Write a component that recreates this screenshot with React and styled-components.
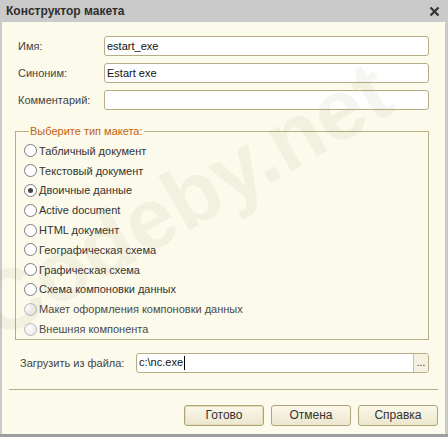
import React from "react";
import styled, { createGlobalStyle } from "styled-components";

const Global = createGlobalStyle`
  html, body { margin: 0; padding: 0; background: #c9c9c9; }
  * { box-sizing: border-box; }
`;

const Window = styled.div`
  width: 448px;
  height: 437px;
  background: #cacaca;
  border-bottom: 3px solid #9e9e9e;
  display: flex;
  flex-direction: column;
  font-family: "Liberation Sans", Arial, sans-serif;
  position: relative;
  overflow: hidden;
`;

const TitleBar = styled.div`
  height: 22px;
  display: flex;
  align-items: center;
  justify-content: space-between;
  padding: 0 6px 0 6px;
  font-weight: bold;
  font-size: 12px;
  color: #2e2e2e;
`;

const Close = styled.svg`
  width: 11px;
  height: 11px;
  margin-right: 2px;
`;

const Body = styled.div`
  flex: 1;
  margin: 0 3px 0 2px;
  background: #fcfaeb;
  display: flex;
  flex-direction: column;
  font-size: 11px;
  color: #3c3c3c;
`;

const Fields = styled.div`
  display: grid;
  grid-template-columns: 86px 1fr;
  row-gap: 7px;
  padding: 14px 16px 0 16px;
  align-items: center;
`;

const Label = styled.div`
  font-size: 11px;
  color: #444;
  white-space: nowrap;
`;

const InputBox = styled.div`
  height: 20px;
  border: 1px solid #b7ad85;
  border-radius: 3px;
  background: #fff;
  display: flex;
  align-items: center;
  padding-left: 2px;
  font-size: 11px;
  color: #111;
  overflow: hidden;
`;

const Group = styled.fieldset`
  margin: 15px 16px 0 13px;
  border: 1px solid #b7ad85;
  padding: 4px 0 0 8px;
  display: flex;
  flex-direction: column;
`;

const Legend = styled.legend`
  color: #c0640f;
  font-size: 11px;
  padding: 0 1px;
  margin-left: 5px;
`;

const RadioRow = styled.div`
  height: 19.8px;
  display: flex;
  align-items: center;
  gap: 2px;
  font-size: 11px;
  color: ${(p) => (p.$disabled ? "#4a4a4a" : "#333")};
  white-space: nowrap;
`;

const Circle = styled.span`
  width: 13px;
  height: 13px;
  border-radius: 50%;
  border: 1px solid ${(p) => (p.$disabled ? "#b8b8b8" : "#7a7a7a")};
  background: ${(p) =>
    p.$disabled ? "radial-gradient(circle at 40% 35%, #fbfbfb, #e6e6e6)" : "#fff"};
  display: flex;
  align-items: center;
  justify-content: center;
  flex: none;
  &::after {
    content: "";
    width: 5px;
    height: 5px;
    border-radius: 50%;
    background: ${(p) => (p.$checked ? "#444" : "transparent")};
  }
`;

const FileRow = styled.div`
  display: grid;
  grid-template-columns: 116px 1fr;
  align-items: center;
  padding: 13px 16px 0 18px;
`;

const FileInput = styled(InputBox)`
  padding-right: 0;
  justify-content: space-between;
`;

const Caret = styled.span`
  display: inline-block;
  width: 1px;
  height: 14px;
  background: #000;
  margin-left: 1px;
  vertical-align: middle;
`;

const DotsButton = styled.div`
  width: 15px;
  height: 18px;
  border-left: 1px solid #c9c1a0;
  background: #f5f2e3;
  display: flex;
  align-items: flex-end;
  justify-content: center;
  padding-bottom: 4px;
  font-size: 10px;
  line-height: 1;
  color: #222;
`;

const Separator = styled.div`
  height: 1px;
  background: #b7ad85;
  margin: 16px 7px 0 7px;
`;

const Buttons = styled.div`
  display: flex;
  justify-content: flex-end;
  gap: 7px;
  padding: 15px 7px 0 0;
`;

const Button = styled.div`
  width: 80px;
  height: 21px;
  border: 1px solid #aea47c;
  border-radius: 3px;
  background: linear-gradient(#fbf8ea, #ece6cd);
  display: flex;
  align-items: center;
  justify-content: center;
  font-size: 12px;
  color: #333;
  box-shadow: ${(p) => (p.$default ? "inset 0 0 0 1px #e6dcb4" : "none")};
`;

const Watermark = styled.div`
  position: absolute;
  left: 8px;
  top: 258px;
  font-family: "Liberation Sans", Arial, sans-serif;
  font-weight: bold;
  font-size: 86px;
  line-height: 100px;
  color: rgba(120, 110, 60, 0.07);
  transform: rotate(-30deg);
  transform-origin: left bottom;
  pointer-events: none;
  white-space: nowrap;
`;

const options = [
  { t: "Табличный документ" },
  { t: "Текстовый документ" },
  { t: "Двоичные данные", checked: true },
  { t: "Active document" },
  { t: "HTML документ" },
  { t: "Географическая схема" },
  { t: "Графическая схема" },
  { t: "Схема компоновки данных" },
  { t: "Макет оформления компоновки данных", disabled: true },
  { t: "Внешняя компонента", disabled: true },
];

export default function App() {
  return (
    <>
      <Global />
      <Window>
        <TitleBar>
          <span>Конструктор макета</span>
          <Close viewBox="0 0 11 11">
            <path d="M1.5 1.5 L9.5 9.5 M9.5 1.5 L1.5 9.5" stroke="#333" strokeWidth="2.2" />
          </Close>
        </TitleBar>
        <Body>
          <Fields>
            <Label>Имя:</Label>
            <InputBox>estart_exe</InputBox>
            <Label>Синоним:</Label>
            <InputBox>Estart exe</InputBox>
            <Label>Комментарий:</Label>
            <InputBox />
          </Fields>
          <Group>
            <Legend>Выберите тип макета:</Legend>
            {options.map((o) => (
              <RadioRow key={o.t} $disabled={o.disabled}>
                <Circle $checked={o.checked} $disabled={o.disabled} />
                <span>{o.t}</span>
              </RadioRow>
            ))}
          </Group>
          <FileRow>
            <Label>Загрузить из файла:</Label>
            <FileInput>
              <span>
                c:\nc.exe
                <Caret />
              </span>
              <DotsButton>...</DotsButton>
            </FileInput>
          </FileRow>
          <Separator />
          <Buttons>
            <Button $default>Готово</Button>
            <Button>Отмена</Button>
            <Button>Справка</Button>
          </Buttons>
        </Body>
        <Watermark>Codeby.net</Watermark>
      </Window>
    </>
  );
}
